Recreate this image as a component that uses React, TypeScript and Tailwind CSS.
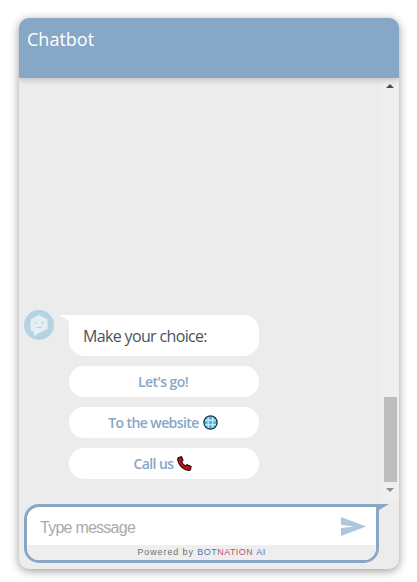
function BotAvatar() {
  return (
    <svg width="30" height="30" viewBox="0 0 30 30" className="shrink-0">
      <circle cx="15" cy="15" r="15" fill="#b5d3e3" />
      <path d="M15 5 L23.5 9.5 V19 L15 23 L10 26.5 V22.5 L6.5 19.5 V9.5 Z" fill="#e3eff5" />
      <circle cx="11.5" cy="13" r="1" fill="#b5d3e3" />
      <circle cx="18.5" cy="13" r="1" fill="#b5d3e3" />
      <rect x="12.5" y="17" width="5" height="1" fill="#b5d3e3" />
    </svg>
  );
}

function GlobeIcon() {
  return (
    <svg width="15" height="15" viewBox="0 0 15 15" className="shrink-0">
      <circle cx="7.5" cy="7.5" r="6.6" fill="#3fc0f0" stroke="#2b3440" strokeWidth="1.3" />
      <path d="M5.2 2v11M9.8 2v11M2 5.2h11M2 9.8h11" stroke="#e4f7fd" strokeWidth="1" fill="none" />
    </svg>
  );
}

function PhoneIcon() {
  return (
    <svg width="15" height="15" viewBox="0 0 15 15" className="shrink-0">
      <path
        d="M1.5 1.5 L4.5 0.8 L6 4.2 L4.6 5.6 C5.3 7.4 6.8 9 8.6 10 L10 8.8 L14 10.6 L13.6 13.2 C13 14.4 11 14.6 9 13.8 C5.2 12.2 2 8.6 0.9 4.6 C0.6 3.4 0.8 2.2 1.5 1.5 Z"
        fill="#c41212"
        stroke="#2a0a0a"
        strokeWidth="1.2"
      />
    </svg>
  );
}

function ChoiceBtn({ children }: { children: React.ReactNode }) {
  return (
    <button
      type="button"
      className="flex h-[31px] w-[190px] items-center justify-center gap-1 rounded-[15px] bg-white pr-[2px] text-[14px] font-semibold tracking-[-0.6px] text-[#87a7c6]"
    >
      {children}
    </button>
  );
}

export default function App() {
  return (
    <div className="h-[582px] w-[417px] bg-white pl-[19px] pt-[18px] font-['Open_Sans',sans-serif]">
      <div className="flex h-[551px] w-[380px] flex-col overflow-hidden rounded-[10px] bg-[#ececec] shadow-[0_2px_10px_rgba(0,0,0,0.4)]">
        {/* Header */}
        <div className="z-10 h-[60px] shrink-0 bg-[#87a7c6] px-2 pt-[8px] text-[18px] leading-[26px] text-white shadow-[0_2px_6px_rgba(0,0,0,0.2)]">
          Chatbot
        </div>

        {/* Messages */}
        <div className="flex h-[424px] shrink-0">
          <div className="flex flex-1 flex-col justify-end gap-[10px] pb-[23px] pl-[5px]">
            <div className="flex items-start">
              <BotAvatar />
              <div className="relative ml-[15px] mt-[5px] flex h-[41px] w-[190px] items-center rounded-[15px] rounded-tl-none bg-white pl-[14px] text-[16px] tracking-[-0.65px] text-[#4a5360]">
                <div className="absolute -left-[10px] top-0 h-0 w-0 border-l-[10px] border-t-[6px] border-l-transparent border-t-white" />
                Make your choice:
              </div>
            </div>
            <div className="ml-[45px] flex flex-col gap-[10px]">
              <ChoiceBtn>Let's go!</ChoiceBtn>
              <ChoiceBtn>
                To the website <GlobeIcon />
              </ChoiceBtn>
              <ChoiceBtn>
                Call us <PhoneIcon />
              </ChoiceBtn>
            </div>
          </div>

          {/* Scrollbar */}
          <div className="flex w-[18px] flex-col items-center bg-[#efefef] pt-[6px]">
            <div className="h-0 w-0 border-x-[4px] border-b-[4px] border-x-transparent border-b-[#4d4d55]" />
            <div className="flex-1" />
            <div className="h-[85px] w-[13px] bg-[#bdbdbd]" />
            <div className="mb-[10px] mt-[6px] h-0 w-0 border-x-[4px] border-t-[4px] border-x-transparent border-t-[#8f8f8f]" />
          </div>
        </div>

        {/* Input */}
        <div className="relative ml-[5px] mt-[2px] flex h-[59px] w-[355px] flex-col rounded-[15px] rounded-tr-none border-[3px] border-[#87a7c6] bg-white">
          <div className="absolute -right-[13px] -top-[3px] h-0 w-0 border-r-[10px] border-t-[6px] border-r-transparent border-t-[#87a7c6]" />
          <div className="flex flex-1 items-center pl-[13px] pr-[10px]">
            <input
              placeholder="Type message"
              className="mt-[4px] w-full bg-transparent font-['Liberation_Sans',sans-serif] text-[16px] tracking-[-0.75px] outline-none placeholder:text-[#aaaaaa]"
            />
            <svg width="25" height="19" viewBox="0 0 25 19" className="shrink-0">
              <path d="M0 0 L25 9.5 L0 19 L0 11 L13 9.5 L0 8 Z" fill="#b0c6da" />
            </svg>
          </div>
          <div className="flex h-[15px] items-center justify-center rounded-b-[12px] bg-[#eeeeee] pt-[1px] font-['Liberation_Sans',sans-serif] text-[9px] tracking-[0.9px] text-[#707070]">
            Powered by&nbsp;
            <span className="tracking-[0.45px] text-[#4a7ab0]">BOT</span>
            <span className="tracking-[0.45px] text-[#b8576f]">NATION</span>
            <span className="tracking-[0.45px] text-[#4a7ab0]">&nbsp;AI</span>
          </div>
        </div>
      </div>
    </div>
  );
}
